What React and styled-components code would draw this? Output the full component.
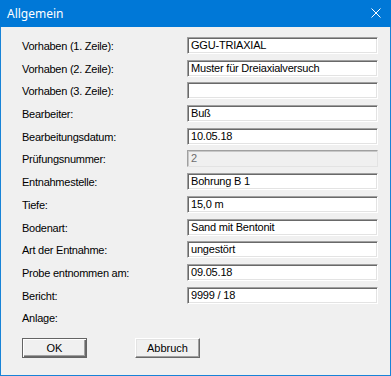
import React from "react";
import styled, { createGlobalStyle } from "styled-components";

const GlobalStyle = createGlobalStyle`
  html, body {
    margin: 0;
    padding: 0;
    background: #f0f0f0;
  }
  body {
    font-family: "Liberation Sans", Arial, sans-serif;
  }
`;

const Window = styled.div`
  width: 391px;
  height: 376px;
  box-sizing: border-box;
  border: 1px solid #1883d7;
  border-top: none;
  background: #f0f0f0;
  display: flex;
  flex-direction: column;
`;

const TitleBar = styled.div`
  height: 26px;
  margin: 0 -1px;
  background: #0078d7;
  color: #fff;
  display: flex;
  align-items: center;
  justify-content: space-between;
  padding: 0 8px 1px 7px;
  font-family: "Noto Sans", "Open Sans", sans-serif;
  font-size: 12px;
`;

const CloseIcon = styled.svg`
  width: 10px;
  height: 10px;
  margin-right: 2px;
  margin-bottom: 1px;
`;

const Body = styled.div`
  padding: 10px 11px 0 21px;
  display: flex;
  flex-direction: column;
`;

const Fields = styled.div`
  display: grid;
  grid-template-columns: 165px 191px;
  grid-auto-rows: 17px;
  row-gap: 5.7px;
  align-items: center;
`;

const Label = styled.div`
  font-size: 11px;
  letter-spacing: -0.25px;
  color: #000;
  white-space: nowrap;
  padding-top: 1px;
`;

const Field = styled.div`
  height: 17px;
  box-sizing: border-box;
  border-style: solid;
  border-width: 1px;
  border-color: ${(p) =>
    p.$disabled ? "#a0a0a0 #e3e3e3 #e3e3e3 #a0a0a0" : "#a0a0a0 #ffffff #ffffff #a0a0a0"};
  box-shadow: ${(p) =>
    p.$disabled
      ? "inset 1px 1px 0 #c8c8c8"
      : "inset 1px 1px 0 #696969, inset -1px -1px 0 #e3e3e3"};
  background: ${(p) => (p.$disabled ? "#f0f0f0" : "#fff")};
  color: ${(p) => (p.$disabled ? "#6d6d6d" : "#000")};
  font-size: 11px;
  letter-spacing: -0.2px;
  line-height: 15px;
  padding-left: 3px;
  white-space: nowrap;
  overflow: hidden;
`;

const Buttons = styled.div`
  display: flex;
  gap: 48px;
  margin-top: 12px;
`;

const Button = styled.div`
  width: 65px;
  height: 20px;
  box-sizing: border-box;
  background: #f0f0f0;
  border: 1px solid;
  border-color: ${(p) =>
    p.$default ? "#646464" : "#ffffff #696969 #696969 #ffffff"};
  box-shadow: ${(p) =>
    p.$default
      ? "inset 1px 1px 0 #fff, inset -1px -1px 0 #696969, inset -2px -2px 0 #a0a0a0"
      : "inset -1px -1px 0 #a0a0a0, inset 1px 1px 0 #e3e3e3"};
  display: flex;
  align-items: center;
  justify-content: center;
  font-size: 11px;
  color: #000;
  padding-bottom: 1px;
`;

const rows = [
  ["Vorhaben (1. Zeile):", "GGU-TRIAXIAL"],
  ["Vorhaben (2. Zeile):", "Muster für Dreiaxialversuch"],
  ["Vorhaben (3. Zeile):", ""],
  ["Bearbeiter:", "Buß"],
  ["Bearbeitungsdatum:", "10.05.18"],
  ["Prüfungsnummer:", "2", true],
  ["Entnahmestelle:", "Bohrung B 1"],
  ["Tiefe:", "15,0 m"],
  ["Bodenart:", "Sand mit Bentonit"],
  ["Art der Entnahme:", "ungestört"],
  ["Probe entnommen am:", "09.05.18"],
  ["Bericht:", "9999 / 18"],
];

export default function App() {
  return (
    <>
      <GlobalStyle />
      <Window>
        <TitleBar>
          <span>Allgemein</span>
          <CloseIcon viewBox="0 0 10 10">
            <path d="M0.5 0.5 L9.5 9.5 M9.5 0.5 L0.5 9.5" stroke="#fff" strokeWidth="1" />
          </CloseIcon>
        </TitleBar>
        <Body>
          <Fields>
            {rows.map(([label, value, disabled]) => (
              <React.Fragment key={label}>
                <Label>{label}</Label>
                <Field $disabled={disabled}>{value}</Field>
              </React.Fragment>
            ))}
            <Label>Anlage:</Label>
          </Fields>
          <Buttons>
            <Button $default>OK</Button>
            <Button>Abbruch</Button>
          </Buttons>
        </Body>
      </Window>
    </>
  );
}
